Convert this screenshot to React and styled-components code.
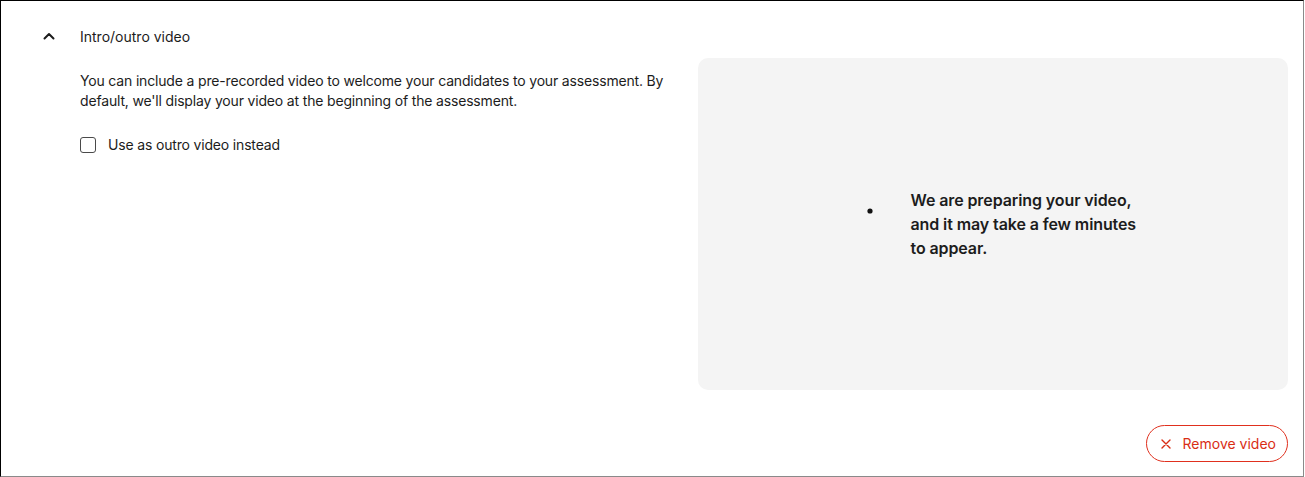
import styled, { createGlobalStyle } from 'styled-components'

const GlobalStyle = createGlobalStyle`
	html, body {
		margin: 0;
		padding: 0;
		background: #ffffff;
	}
	body {
		font-family: Inter, "Noto Sans", sans-serif;
		color: #1c1c1c;
	}
`

const Frame = styled.div`
	width: 1304px;
	height: 477px;
	box-sizing: border-box;
	border-top: 1px solid #000;
	border-left: 1px solid #000;
	border-right: 1px solid #8a8a8a;
	border-bottom: 1px solid #8a8a8a;
	padding: 23px 15px 14px 0;
	display: flex;
	flex-direction: column;
`

const Header = styled.div`
	display: flex;
	align-items: center;
	height: 24px;
	padding-left: 41px;
	gap: 24px;
	font-size: 14px;
	color: #1c1c1c;
`

const Chevron = styled.svg`
	width: 14px;
	height: 14px;
	flex-shrink: 0;
`

const Body = styled.div`
	display: grid;
	grid-template-columns: 600px 590px;
	column-gap: 18px;
	margin-top: 10px;
	padding-left: 79px;
`

const LeftCol = styled.div`
	padding-top: 13px;
	display: flex;
	flex-direction: column;
`

const Description = styled.p`
	margin: 0;
	font-size: 14px;
	line-height: 20px;
	letter-spacing: -0.17px;
	color: #1c1c1c;
`

const CheckRow = styled.label`
	display: flex;
	align-items: center;
	gap: 12px;
	margin-top: 24px;
	font-size: 14px;
	line-height: 20px;
	letter-spacing: -0.17px;
`

const CheckBox = styled.span`
	width: 16px;
	height: 16px;
	box-sizing: border-box;
	border: 1.5px solid #4a4a4a;
	border-radius: 3px;
	background: #fff;
`

const Preview = styled.div`
	height: 332px;
	background: #f4f4f4;
	border-radius: 10px;
	display: flex;
	align-items: center;
	justify-content: center;
	gap: 21px;
`

const Spinner = styled.svg`
	width: 40px;
	height: 40px;
	flex-shrink: 0;
`

const PreviewText = styled.p`
	margin: 0;
	width: 226px;
	font-size: 16px;
	line-height: 24px;
	font-weight: 600;
	letter-spacing: -0.1px;
	color: #1c1c1c;
`

const Footer = styled.div`
	display: flex;
	justify-content: flex-end;
	margin-top: 35px;
`

const RemoveButton = styled.button`
	display: flex;
	align-items: center;
	gap: 12px;
	height: 37px;
	box-sizing: border-box;
	padding: 0 11px 0 14px;
	border: 1px solid #e0301e;
	border-radius: 19px;
	background: #fff;
	color: #d92d14;
	font-family: Inter, "Noto Sans", sans-serif;
	font-size: 14px;
	cursor: pointer;
`

export default function App() {
	return (
		<>
			<GlobalStyle />
			<Frame>
				<Header>
					<Chevron viewBox="0 0 14 14" fill="none">
						<path d="M2.5 9.5L7 5L11.5 9.5" stroke="#1c1c1c" strokeWidth="2" strokeLinecap="round" strokeLinejoin="round" />
					</Chevron>
					<span>Intro/outro video</span>
				</Header>
				<Body>
					<LeftCol>
						<Description>
							You can include a pre-recorded video to welcome your candidates to your assessment. By default, we'll display your video at the beginning of the assessment.
						</Description>
						<CheckRow>
							<CheckBox />
							<span>Use as outro video instead</span>
						</CheckRow>
					</LeftCol>
					<Preview>
						<Spinner viewBox="0 0 40 40">
							<circle cx="20" cy="7" r="2.6" fill="#111" />
						</Spinner>
						<PreviewText>We are preparing your video, and it may take a few minutes to appear.</PreviewText>
					</Preview>
				</Body>
				<Footer>
					<RemoveButton>
						<svg width="10" height="10" viewBox="0 0 10 10">
							<path d="M1 1L9 9M9 1L1 9" stroke="#d92d14" strokeWidth="1.4" strokeLinecap="round" />
						</svg>
						Remove video
					</RemoveButton>
				</Footer>
			</Frame>
		</>
	)
}
